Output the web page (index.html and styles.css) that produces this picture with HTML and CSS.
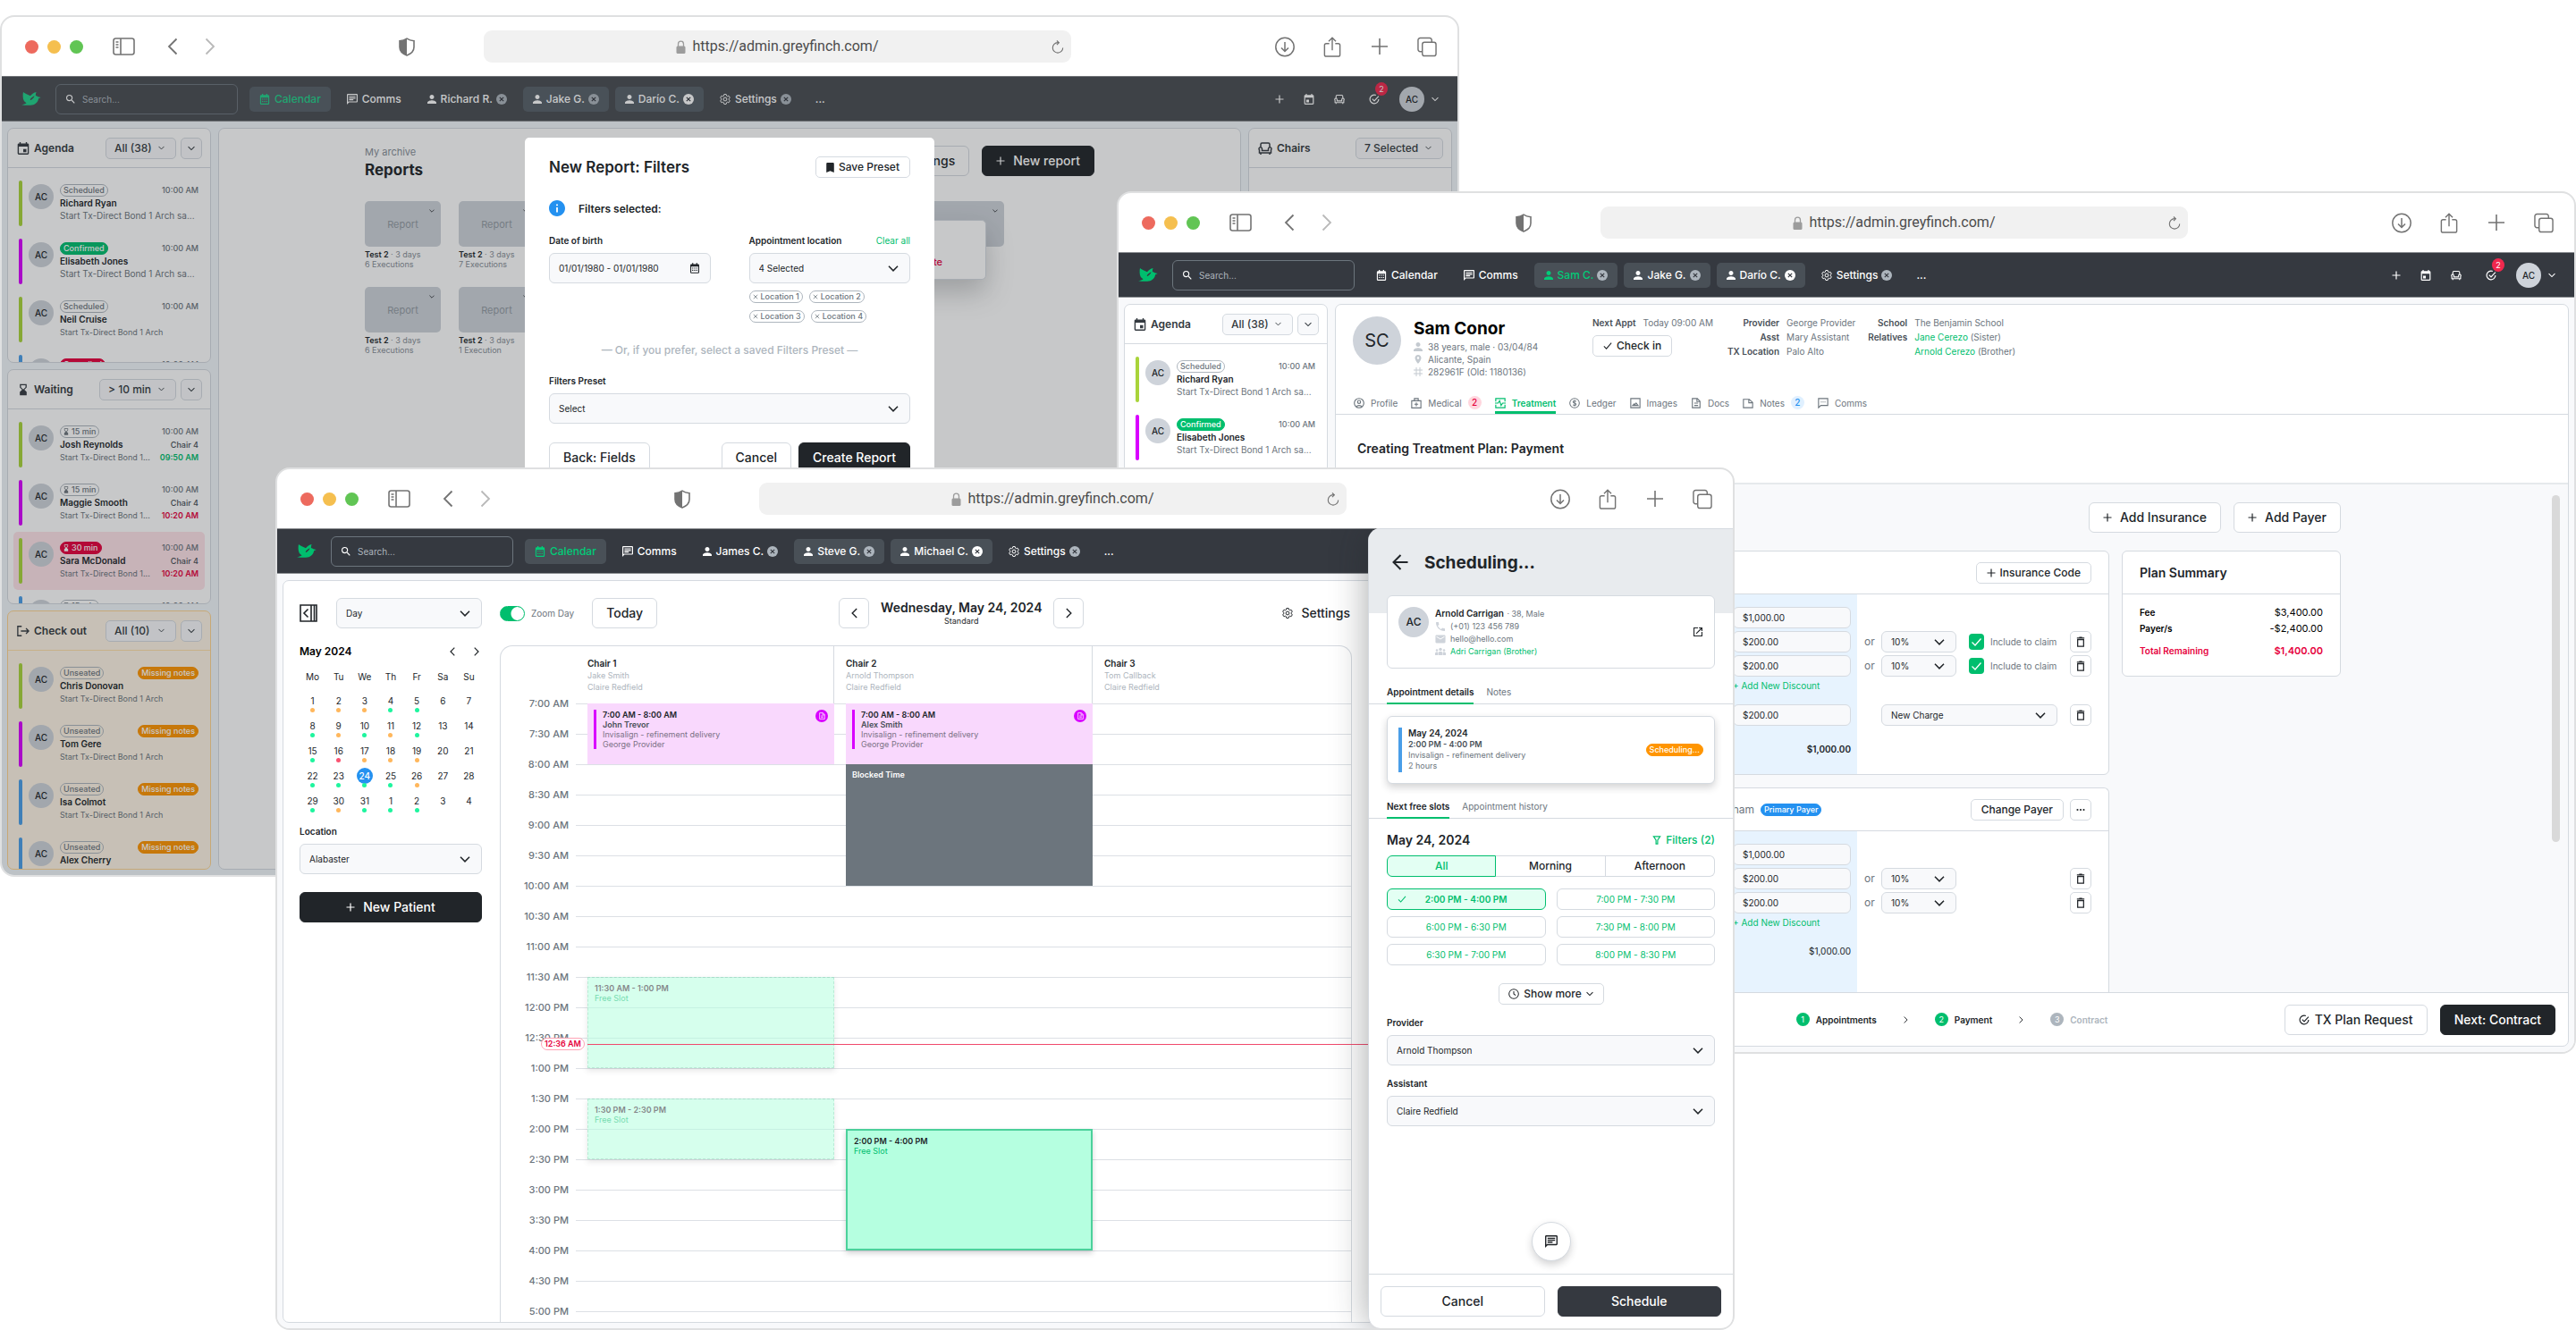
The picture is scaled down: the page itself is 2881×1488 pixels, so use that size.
FILE: index.html
```html
<!DOCTYPE html>
<html lang="en">
<head>
<meta charset="utf-8">
<meta name="viewport" content="width=device-width, initial-scale=1">
<title>Greyfinch</title>
<link rel="stylesheet" href="styles.css">
</head>
<body>
<svg class="sprite" aria-hidden="true">
  <symbol id="sidebar" viewBox="0 0 25 20"><g fill="none" stroke="currentColor" stroke-width="1.6"><rect x="1" y="1" width="23" height="18" rx="2.5"/><path d="M9 1v18M3.5 5h3M3.5 8h3M3.5 11h3"/></g></symbol>
  <symbol id="back" viewBox="0 0 12 20"><path d="M10.5 1.5 2 10l8.5 8.5" fill="none" stroke="currentColor" stroke-width="1.8"/></symbol>
  <symbol id="forward" viewBox="0 0 12 20"><path d="M1.5 1.5 10 10l-8.5 8.5" fill="none" stroke="currentColor" stroke-width="1.8"/></symbol>
  <symbol id="shield" viewBox="0 0 18 21"><path d="M9 1.2c2.5 1.6 5 2.3 8 2.6v7c0 4.6-3.5 7.5-8 9.2-4.500-1.700-8-4.600-8-9.200v-7c3-.3 5.500-1 8-2.600z" fill="none" stroke="currentColor" stroke-width="1.6"/><path d="M9 1.200v18.800c-4.500-1.700-8-4.600-8-9.200v-7c3-.3 5.500-1 8-2.600z"/></symbol>
  <symbol id="lock" viewBox="0 0 11 15"><path d="M2.5 7V4.2a3 3 0 0 1 6 0V7" fill="none" stroke="currentColor" stroke-width="1.3"/><rect x=".5" y="6.5" width="10" height="8.5" rx="1.5"/></symbol>
  <symbol id="refresh" viewBox="0 0 16 17"><g fill="none" stroke="currentColor" stroke-width="1.3"><path d="M14.5 9.5a6.5 6.5 0 1 1-6.500-6.500h1.500"/><path d="M6.800.500 9.500 3 6.800 5.800"/></g></symbol>
  <symbol id="download" viewBox="0 0 22 22"><g fill="none" stroke="currentColor" stroke-width="1.5"><circle cx="11" cy="11" r="10.2"/><path d="M11 5.500v10M7 12l4 4 4-4"/></g></symbol>
  <symbol id="share" viewBox="0 0 20 24"><g fill="none" stroke="currentColor" stroke-width="1.5"><path d="M6.500 8H3a2 2 0 0 0-2 2v11a2 2 0 0 0 2 2h14a2 2 0 0 0 2-2V10a2 2 0 0 0-2-2h-3.500M10 16V1.500M5.800 5.500 10 1.300l4.200 4.200"/></g></symbol>
  <symbol id="newtab" viewBox="0 0 18 18"><path d="M9 0v18M0 9h18" fill="none" stroke="currentColor" stroke-width="1.6"/></symbol>
  <symbol id="copy" viewBox="0 0 23 23"><g fill="none" stroke="currentColor" stroke-width="1.5"><path d="M6 17H3.500A2.500 2.500 0 0 1 1 14.500v-11A2.500 2.500 0 0 1 3.500 1h11A2.500 2.500 0 0 1 17 3.500V6"/><rect x="6" y="6" width="16" height="16" rx="2.5"/></g></symbol>
  <symbol id="bird" viewBox="0 0 22 15"><path d="M0 14.200c2.300-.3 4.200-.9 5.600-2C2.900 11 1.700 8.300 1.600 4.700 1.500 3 1.700 1.300 2 0c2 2 5.300 2.700 8 4.300 1.700-2.300 4-3.600 6.600-4.200-.6 1.300-.8 2.600-.7 3.800 1 .3 1.900.7 2.600 1.400l3.200.7-2.600 1.200c-.5 4.500-4.300 7.300-9.100 7.500-3.300.3-6.700.1-10-.5zM9.600 8.400l1 .5c1.700-1 3.300-2.700 4-4.700-1.900.8-3.900 2.300-5 4.200z" fill-rule="evenodd"/></symbol>
  <symbol id="search" viewBox="3 3 18 18"><path d="M15.500 14h-.79l-.28-.27A6.471 6.471 0 0 0 16 9.500 6.500 6.500 0 1 0 9.500 16c1.610 0 3.090-.59 4.230-1.570l.27.28v.79l5 4.990L20.490 19l-4.990-5zm-6 0C7.010 14 5 11.990 5 9.500S7.010 5 9.500 5 14 7.010 14 9.500 11.990 14 9.500 14z"/></symbol>
  <symbol id="calendar" viewBox="0 0 12 14"><path d="M2.500 0v1.500H1.500A1.500 1.500 0 0 0 0 3v9.500A1.500 1.500 0 0 0 1.500 14h9a1.500 1.500 0 0 0 1.500-1.500V3a1.500 1.500 0 0 0-1.500-1.500h-1V0H8v1.500H4V0zM1.300 5h9.400v7.600H1.300zM2.500 6.300h1.500v1.400H2.500zm2.700 0h1.500v1.400H5.200zm2.700 0h1.500v1.400H7.900zM2.500 9.200h1.500v1.400H2.500zm2.700 0h1.500v1.400H5.200zm2.700 0h1.500v1.400H7.900z" fill-rule="evenodd"/></symbol>
  <symbol id="chat" viewBox="2 2 20 20"><path d="M20 2H4c-1.100 0-2 .9-2 2v18l4-4h14c1.100 0 2-.9 2-2V4c0-1.100-.9-2-2-2zm0 14H5.170L4 17.170V4h16v12zM6 12h8v2H6zM6 9h12v2H6zM6 6h12v2H6z" fill-rule="evenodd"/></symbol>
  <symbol id="user" viewBox="4 4 16 16"><path d="M12 12c2.210 0 4-1.790 4-4s-1.790-4-4-4-4 1.790-4 4 1.790 4 4 4zm0 2c-2.670 0-8 1.340-8 4v2h16v-2c0-2.660-5.330-4-8-4z"/></symbol>
  <symbol id="close" viewBox="0 0 12 12"><circle cx="6" cy="6" r="6"/><path d="M3.800 3.800l4.400 4.400M8.200 3.800 3.800 8.200" stroke="#353940" stroke-width="1.2"/></symbol>
  <symbol id="gear" viewBox="1 1 22 22"><g fill="none" stroke="currentColor" stroke-width="1.8"><path d="M19.430 12.980c.04-.32.070-.64.070-.98 0-.34-.03-.66-.07-.98l2.110-1.650c.19-.15.240-.42.120-.64l-2-3.460c-.09-.16-.26-.25-.44-.25l-2.660.970c-.52-.4-1.080-.73-1.690-.98l-.38-2.650C14.460 2.180 14.250 2 14 2h-4c-.25 0-.46.180-.49.420l-.38 2.650c-.61.250-1.170.590-1.690.98l-2.490-1c-.23-.03-.5 0-.61.220l-2 3.460c-.13.220-.07.490.12.640l2.110 1.650c-.04.320-.07.650-.07.980 0 .330.030.660.070.980l-2.110 1.650c-.19.150-.24.420-.12.640l2 3.460c.09.160.26.250.44.250l2.660-1.030c.52.4 1.080.73 1.690.98l.38 2.650c.03.240.24.420.49.420h4c.25 0 .46-.18.490-.42l.38-2.650c.61-.25 1.170-.59 1.690-.98l2.490 1c.23.080.5 0 .61-.22l2-3.460c.12-.22.070-.49-.12-.64z"/><circle cx="12" cy="12" r="3.500"/></g></symbol>
  <symbol id="plus" viewBox="0 0 10 10"><path d="M5 .5v9M.5 5h9" stroke="currentColor" stroke-width="1.2" fill="none"/></symbol>
  <symbol id="event" viewBox="3 1 18 20"><path d="M12 12H7v5h5v-5zM16 1v2H8V1H6v2H5c-1.110 0-1.990.9-1.990 2L3 19c0 1.100.89 2 2 2h14c1.100 0 2-.9 2-2V5c0-1.100-.9-2-2-2h-1V1h-2zm3 18H5V8h14v11z"/></symbol>
  <symbol id="agenda" viewBox="3 1 18 20"><path d="M17 12h-5v5h5v-5zM16 1v2H8V1H6v2H5c-1.110 0-1.990.9-1.990 2L3 19c0 1.100.89 2 2 2h14c1.100 0 2-.9 2-2V5c0-1.100-.9-2-2-2h-1V1h-2zm3 18H5V8h14v11z"/></symbol>
  <symbol id="chair" viewBox="0 0 16 14"><g fill="none" stroke="currentColor" stroke-width="1.5"><path d="M3 6V2.500A1.500 1.500 0 0 1 4.500 1h7A1.500 1.500 0 0 1 13 2.500V6M4.500 9.500h7V7.500a1.750 1.750 0 1 1 3 1.200V12h-13V8.700a1.750 1.750 0 1 1 3-1.200zM3 12v2M13 12v2"/></g></symbol>
  <symbol id="done" viewBox="0 0 16 16"><path d="M14.500 8A6.500 6.500 0 1 1 10.500 2M5 7.500l3 3 6.500-7" fill="none" stroke="currentColor" stroke-width="1.6"/></symbol>
  <symbol id="down" viewBox="0 0 10 6"><path d="M.7.7 5 5 9.300.7" fill="none" stroke="currentColor" stroke-width="1.3"/></symbol>
  <symbol id="left" viewBox="0 0 6 10"><path d="M5.300.7 1 5l4.300 4.300" fill="none" stroke="currentColor" stroke-width="1.2"/></symbol>
  <symbol id="right" viewBox="0 0 6 10"><path d="M.7.7 5 5 .7 9.300" fill="none" stroke="currentColor" stroke-width="1.2"/></symbol>
  <symbol id="hourglass" viewBox="5 1 14 22"><path d="M6 2h12v6l-4 4 4 4v6H6v-6l4-4-4-4zM8 4v3.500l4 4 4-4V4z" fill-rule="evenodd"/></symbol>
  <symbol id="exit" viewBox="0 0 16 14"><path d="M6 1H1v12h5M5 7h10M11.500 3.500 15 7l-3.500 3.500" fill="none" stroke="currentColor" stroke-width="1.5"/></symbol>
  <symbol id="bookmark" viewBox="5 3 14 18"><path d="M17 3H7c-1.100 0-1.990.9-1.990 2L5 21l7-3 7 3V5c0-1.100-.9-2-2-2z"/></symbol>
  <symbol id="info" viewBox="2 2 20 20"><path d="M12 2C6.480 2 2 6.480 2 12s4.480 10 10 10 10-4.480 10-10S17.520 2 12 2zm1 15h-2v-6h2v6zm0-8h-2V7h2v2z"/></symbol>
  <symbol id="x" viewBox="0 0 8 8"><path d="M1 1l6 6M7 1 1 7" fill="none" stroke="currentColor"/></symbol>
  <symbol id="pin" viewBox="5 2 14 20"><path d="M12 2C8.130 2 5 5.130 5 9c0 5.250 7 13 7 13s7-7.750 7-13c0-3.870-3.130-7-7-7zm0 9.500c-1.380 0-2.500-1.120-2.500-2.500s1.120-2.500 2.500-2.500 2.500 1.120 2.500 2.500-1.120 2.500-2.500 2.500z"/></symbol>
  <symbol id="hash" viewBox="0 0 10 10"><path d="M3 0v10M7 0v10M0 3h10M0 7h10" fill="none" stroke="currentColor"/></symbol>
  <symbol id="check" viewBox="0 0 12 10"><path d="M1 5.500 4.300 8.800 11 1" fill="none" stroke="currentColor" stroke-width="1.3"/></symbol>
  <symbol id="profile" viewBox="0 0 14 14"><g fill="none" stroke="currentColor" stroke-width="1.3"><circle cx="7" cy="7" r="6.200"/><circle cx="7" cy="5.500" r="2"/><path d="M3.500 11.500c1-2 6-2 7 0"/></g></symbol>
  <symbol id="medical" viewBox="0 0 14 14"><path d="M1 4h12v9.300H1zM4.500 4V1h5v3M7 6v5M4.500 8.500h5" fill="none" stroke="currentColor" stroke-width="1.3"/></symbol>
  <symbol id="pulse" viewBox="0 0 14 14"><path d="M1 5V1h12v4M1 9v4h12V9M0 7h4l2-3 2 6 2-3h4" fill="none" stroke="currentColor" stroke-width="1.4"/></symbol>
  <symbol id="dollar" viewBox="0 0 14 14"><g fill="none" stroke="currentColor" stroke-width="1.2"><circle cx="7" cy="7" r="6.200"/><path d="M9 5c-1-1.500-4-1-4 .5C5 7.500 9 6.500 9 8.500 9 10 6 10.500 5 9M7 2.800v8.400"/></g></symbol>
  <symbol id="image" viewBox="0 0 14 14"><path d="M1 1h12v12H1zM3.500 10h7L8 7l-1.500 2-1-1z" fill="none" stroke="currentColor" stroke-width="1.3"/></symbol>
  <symbol id="doc" viewBox="0 0 12 14"><path d="M1 1h6.500L11 4.500V13H1zM3.500 7h5M3.500 10h5M7 1v4h4" fill="none" stroke="currentColor" stroke-width="1.3"/></symbol>
  <symbol id="note" viewBox="0 0 14 14"><path d="M1 2h7.500L13 6v7H1zM8 2v4.500h5" fill="none" stroke="currentColor" stroke-width="1.3"/></symbol>
  <symbol id="message" viewBox="0 0 14 14"><path d="M1 13V1h12v9H4zM4 5.500h1.200M6.400 5.500h1.200M8.800 5.500H10" fill="none" stroke="currentColor" stroke-width="1.3"/></symbol>
  <symbol id="trash" viewBox="0 0 12 14"><path d="M2 4h8v9H2zM1 2h10M4 1h4" fill="none" stroke="currentColor" stroke-width="1.5"/></symbol>
  <symbol id="dots" viewBox="0 0 12 4"><circle cx="1.800" cy="2" r="1.300"/><circle cx="6" cy="2" r="1.300"/><circle cx="10.200" cy="2" r="1.300"/></symbol>
  <symbol id="collapse" viewBox="0 0 20 20"><path d="M1 1h18v18H1zM13 1v18M16.500 1v18M9.500 5.500 5 10l4.500 4.500" fill="none" stroke="currentColor" stroke-width="1.6"/></symbol>
  <symbol id="arrow" viewBox="0 0 18 18"><path d="M17.500 9H1.500M9.500 1 1.500 9l8 8" fill="none" stroke="currentColor" stroke-width="2"/></symbol>
  <symbol id="phone" viewBox="3 3 18 18"><path d="M6.620 10.790c1.440 2.830 3.760 5.140 6.590 6.590l2.200-2.200c.27-.27.67-.36 1.020-.24 1.120.37 2.330.57 3.570.57.55 0 1 .45 1 1V20c0 .55-.45 1-1 1-9.390 0-17-7.610-17-17 0-.55.45-1 1-1h3.500c.55 0 1 .45 1 1 0 1.250.2 2.450.57 3.570.11.35.03.74-.25 1.020l-2.200 2.200z"/></symbol>
  <symbol id="mail" viewBox="2 3 20 18"><path d="M20 4H4c-1.100 0-1.990.9-1.990 2L2 18c0 1.100.9 2 2 2h16c1.100 0 2-.9 2-2V6c0-1.100-.9-2-2-2zm0 4l-8 5-8-5V6l8 5 8-5v2z"/></symbol>
  <symbol id="people" viewBox="0 0 24 18"><circle cx="12" cy="4" r="3.500"/><circle cx="4" cy="6" r="2.500"/><circle cx="20" cy="6" r="2.500"/><path d="M0 17v-4c0-2 2-3 4-3h2v7zM24 17v-4c0-2-2-3-4-3h-2v7zM7 17v-5c0-2 2-3 5-3s5 1 5 3v5z"/></symbol>
  <symbol id="open" viewBox="3 3 18 18"><path d="M19 19H5V5h7V3H3v18h18v-9h-2v7zM14 3v2h3.590l-9.830 9.830 1.410 1.410L19 6.410V10h2V3h-7z"/></symbol>
  <symbol id="filter" viewBox="0 0 10 11"><path d="M1 1h8L6 5.500V10H4V5.500z" fill="none" stroke="currentColor" stroke-width="1.3"/></symbol>
  <symbol id="clock" viewBox="0 0 14 14"><g fill="none" stroke="currentColor" stroke-width="1.2"><circle cx="7" cy="7" r="6.200"/><path d="M7 3.500V7l2.500 2"/></g></symbol>
</svg>

<main class="desktop">

<!-- Reports window -->
<section class="window window-reports" aria-label="Reports">
  <header class="chrome">
    <div class="chrome-left">
      <span class="lights"><i class="light red"></i><i class="light amber"></i><i class="light green"></i></span>
      <svg class="c-sidebar"><use href="#sidebar"/></svg>
      <svg class="c-arrow"><use href="#back"/></svg><svg class="c-arrow c-next"><use href="#forward"/></svg>
      <svg class="c-shield"><use href="#shield"/></svg>
    </div>
    <div class="address"><span class="url"><svg class="c-lock"><use href="#lock"/></svg>https://admin.greyfinch.com/</span><svg class="c-refresh"><use href="#refresh"/></svg></div>
    <div class="chrome-right"><svg><use href="#download"/></svg><svg><use href="#share"/></svg><svg class="c-plus"><use href="#newtab"/></svg><svg><use href="#copy"/></svg></div>
  </header>
  <div class="app">
    <nav class="nav">
      <svg class="bird"><use href="#bird"/></svg>
      <label class="nav-search"><svg class="i10"><use href="#search"/></svg><input type="search" placeholder="Search..." aria-label="Search"></label>
      <div class="nav-tabs">
        <a href="#" class="pill current"><svg class="i12"><use href="#calendar"/></svg>Calendar</a>
        <a href="#"><svg class="i12"><use href="#chat"/></svg>Comms</a>
        <a href="#"><svg class="i10"><use href="#user"/></svg>Richard R.<svg class="x"><use href="#close"/></svg></a>
        <a href="#" class="pill"><svg class="i10"><use href="#user"/></svg>Jake G.<svg class="x"><use href="#close"/></svg></a>
        <a href="#" class="pill"><svg class="i10"><use href="#user"/></svg>Darío C.<svg class="x on"><use href="#close"/></svg></a>
        <a href="#"><svg class="i12"><use href="#gear"/></svg>Settings<svg class="x"><use href="#close"/></svg></a>
        <a href="#" class="more">...</a>
      </div>
      <div class="nav-tools"><svg class="i10"><use href="#plus"/></svg><svg class="i12"><use href="#event"/></svg><svg class="i12"><use href="#chair"/></svg><span class="alerts"><svg class="i12"><use href="#done"/></svg><b class="badge">2</b></span><span class="me"><span class="avatar">AC</span><svg class="i8"><use href="#down"/></svg></span></div>
    </nav>
    <div class="body">
      <aside class="side">
        <section class="panel queue">
          <header class="panel-head"><svg class="i14"><use href="#agenda"/></svg><h2>Agenda</h2><span class="pick pick-a"><select aria-label="Agenda filter"><option>All (38)</option></select><svg><use href="#down"/></svg></span><button class="mini" aria-label="More"><svg class="i8"><use href="#down"/></svg></button></header>
          <ul class="list">
            <li class="item lime"><span class="avatar">AC</span><div class="who"><span class="tag">Scheduled</span><b>Richard Ryan</b></div><div class="when">10:00 AM</div><p class="big">Start Tx-Direct Bond 1 Arch sa...</p></li>
            <li class="item pink"><span class="avatar">AC</span><div class="who"><span class="tag ok">Confirmed</span><b>Elisabeth Jones</b></div><div class="when">10:00 AM</div><p class="big">Start Tx-Direct Bond 1 Arch sa...</p></li>
            <li class="item lime"><span class="avatar">AC</span><div class="who"><span class="tag">Scheduled</span><b>Neil Cruise</b></div><div class="when">10:00 AM</div><p>Start Tx-Direct Bond 1 Arch</p></li>
            <li class="item blue"><span class="avatar">AC</span><div class="who"><span class="tag bad">Cancelled</span></div><div class="when">10:00 AM</div></li>
          </ul>
        </section>
        <section class="panel queue">
          <header class="panel-head"><svg class="i14"><use href="#hourglass"/></svg><h2>Waiting</h2><span class="pick pick-w"><select aria-label="Waiting filter"><option>&gt; 10 min</option></select><svg><use href="#down"/></svg></span><button class="mini" aria-label="More"><svg class="i8"><use href="#down"/></svg></button></header>
          <ul class="list">
            <li class="item lime"><span class="avatar">AC</span><div class="who"><span class="tag"><svg><use href="#hourglass"/></svg>15 min</span><b>Josh Reynolds</b></div><div class="when">10:00 AM<b>Chair 4</b><strong class="early">09:50 AM</strong></div><p>Start Tx-Direct Bond 1...</p></li>
            <li class="item pink"><span class="avatar">AC</span><div class="who"><span class="tag"><svg><use href="#hourglass"/></svg>15 min</span><b>Maggie Smooth</b></div><div class="when">10:00 AM<b>Chair 4</b><strong class="late">10:20 AM</strong></div><p>Start Tx-Direct Bond 1...</p></li>
            <li class="item lime alarm"><span class="avatar">AC</span><div class="who"><span class="tag bad"><svg><use href="#hourglass"/></svg>30 min</span><b>Sara McDonald</b></div><div class="when">10:00 AM<b>Chair 4</b><strong class="late">10:20 AM</strong></div><p>Start Tx-Direct Bond 1...</p></li>
            <li class="item blue"><span class="avatar">AC</span><div class="who"><span class="tag"><svg><use href="#hourglass"/></svg>15 min</span></div><div class="when">10:00 AM</div></li>
          </ul>
        </section>
        <section class="panel queue queue-out">
          <header class="panel-head"><svg class="i14"><use href="#exit"/></svg><h2>Check out</h2><span class="pick pick-a"><select aria-label="Check out filter"><option>All (10)</option></select><svg><use href="#down"/></svg></span><button class="mini" aria-label="More"><svg class="i8"><use href="#down"/></svg></button></header>
          <ul class="list">
            <li class="item lime"><span class="avatar">AC</span><div class="who"><span class="tag">Unseated</span><b>Chris Donovan</b></div><div class="when"><span class="tag warn">Missing notes</span></div><p>Start Tx-Direct Bond 1 Arch</p></li>
            <li class="item pink"><span class="avatar">AC</span><div class="who"><span class="tag">Unseated</span><b>Tom Gere</b></div><div class="when"><span class="tag warn">Missing notes</span></div><p>Start Tx-Direct Bond 1 Arch</p></li>
            <li class="item blue"><span class="avatar">AC</span><div class="who"><span class="tag">Unseated</span><b>Isa Colmot</b></div><div class="when"><span class="tag warn">Missing notes</span></div><p>Start Tx-Direct Bond 1 Arch</p></li>
            <li class="item blue"><span class="avatar">AC</span><div class="who"><span class="tag">Unseated</span><b>Alex Cherry</b></div><div class="when"><span class="tag warn">Missing notes</span></div><p>Start Tx-Direct Bond 1 Arch</p></li>
          </ul>
        </section>
      </aside>
      <section class="panel reports">
        <header class="reports-head"><div><p>My archive</p><h1>Reports</h1></div><div class="actions"><button class="btn">Settings</button><button class="btn dark"><svg class="i10"><use href="#plus"/></svg>New report</button></div></header>
        <div class="tiles">
          <article><div class="tile">Report<svg class="i6"><use href="#down"/></svg></div><p><b>Test 2</b> · 3 days<br>6 Executions</p></article>
          <article><div class="tile">Report<svg class="i6"><use href="#down"/></svg></div><p><b>Test 2</b> · 3 days<br>7 Executions</p></article>
          <article class="last"><div class="tile"><svg class="i6"><use href="#down"/></svg></div><div class="popover"><a href="#">Delete</a></div></article>
          <article class="row2"><div class="tile">Report<svg class="i6"><use href="#down"/></svg></div><p><b>Test 2</b> · 3 days<br>6 Executions</p></article>
          <article><div class="tile">Report<svg class="i6"><use href="#down"/></svg></div><p><b>Test 2</b> · 3 days<br>1 Execution</p></article>
        </div>
      </section>
      <aside class="panel chairs"><header class="panel-head"><svg class="i16"><use href="#chair"/></svg><h2>Chairs</h2><span class="pick pick-c"><select aria-label="Chairs shown"><option>7 Selected</option></select><svg><use href="#down"/></svg></span></header></aside>
    </div>
    <div class="scrim"></div>
    <form class="modal" role="dialog" aria-label="New Report: Filters">
      <header class="modal-head"><h2>New Report: Filters</h2><button type="button" class="btn small"><svg class="bm"><use href="#bookmark"/></svg>Save Preset</button></header>
      <p class="notice"><svg><use href="#info"/></svg>Filters selected:</p>
      <div class="pair">
        <div class="field"><label for="dob">Date of birth</label><span class="control"><input id="dob" value="01/01/1980 - 01/01/1980"><svg class="cal"><use href="#calendar"/></svg></span></div>
        <div class="field"><span class="field-top"><label for="loc">Appointment location</label><a href="#">Clear all</a></span><span class="control"><select id="loc"><option>4 Selected</option></select><svg class="i12"><use href="#down"/></svg></span>
          <div class="chips"><button type="button" class="chip"><svg><use href="#x"/></svg>Location 1</button><button type="button" class="chip"><svg><use href="#x"/></svg>Location 2</button></div>
          <div class="chips"><button type="button" class="chip"><svg><use href="#x"/></svg>Location 3</button><button type="button" class="chip"><svg><use href="#x"/></svg>Location 4</button></div>
        </div>
      </div>
      <p class="or-line">— Or, if you prefer, select a saved Filters Preset —</p>
      <div class="field"><label for="preset">Filters Preset</label><span class="control"><select id="preset"><option>Select</option></select><svg class="i12"><use href="#down"/></svg></span></div>
      <footer class="modal-foot"><button type="button" class="btn">Back: Fields</button><span><button type="button" class="btn">Cancel</button><button class="btn dark">Create Report</button></span></footer>
    </form>
  </div>
</section>

<!-- Treatment plan window -->
<section class="window window-plan" aria-label="Treatment plan">
  <header class="chrome">
    <div class="chrome-left">
      <span class="lights"><i class="light red"></i><i class="light amber"></i><i class="light green"></i></span>
      <svg class="c-sidebar"><use href="#sidebar"/></svg>
      <svg class="c-arrow"><use href="#back"/></svg><svg class="c-arrow c-next"><use href="#forward"/></svg>
      <svg class="c-shield"><use href="#shield"/></svg>
    </div>
    <div class="address"><span class="url"><svg class="c-lock"><use href="#lock"/></svg>https://admin.greyfinch.com/</span><svg class="c-refresh"><use href="#refresh"/></svg></div>
    <div class="chrome-right"><svg><use href="#download"/></svg><svg><use href="#share"/></svg><svg class="c-plus"><use href="#newtab"/></svg><svg><use href="#copy"/></svg></div>
  </header>
  <div class="app">
    <nav class="nav">
      <svg class="bird"><use href="#bird"/></svg>
      <label class="nav-search"><svg class="i10"><use href="#search"/></svg><input type="search" placeholder="Search..." aria-label="Search"></label>
      <div class="nav-tabs">
        <a href="#"><svg class="i12"><use href="#calendar"/></svg>Calendar</a>
        <a href="#"><svg class="i12"><use href="#chat"/></svg>Comms</a>
        <a href="#" class="pill current"><svg class="i10"><use href="#user"/></svg>Sam C.<svg class="x"><use href="#close"/></svg></a>
        <a href="#" class="pill"><svg class="i10"><use href="#user"/></svg>Jake G.<svg class="x"><use href="#close"/></svg></a>
        <a href="#" class="pill"><svg class="i10"><use href="#user"/></svg>Darío C.<svg class="x on"><use href="#close"/></svg></a>
        <a href="#"><svg class="i12"><use href="#gear"/></svg>Settings<svg class="x"><use href="#close"/></svg></a>
        <a href="#" class="more">...</a>
      </div>
      <div class="nav-tools"><svg class="i10"><use href="#plus"/></svg><svg class="i12"><use href="#event"/></svg><svg class="i12"><use href="#chair"/></svg><span class="alerts"><svg class="i12"><use href="#done"/></svg><b class="badge">2</b></span><span class="me"><span class="avatar">AC</span><svg class="i8"><use href="#down"/></svg></span></div>
    </nav>
    <div class="body">
      <aside class="side">
        <section class="panel queue">
          <header class="panel-head"><svg class="i14"><use href="#agenda"/></svg><h2>Agenda</h2><span class="pick pick-a"><select aria-label="Agenda filter"><option>All (38)</option></select><svg><use href="#down"/></svg></span><button class="mini" aria-label="More"><svg class="i8"><use href="#down"/></svg></button></header>
          <ul class="list">
            <li class="item lime"><span class="avatar">AC</span><div class="who"><span class="tag">Scheduled</span><b>Richard Ryan</b></div><div class="when">10:00 AM</div><p class="big">Start Tx-Direct Bond 1 Arch sa...</p></li>
            <li class="item pink"><span class="avatar">AC</span><div class="who"><span class="tag ok">Confirmed</span><b>Elisabeth Jones</b></div><div class="when">10:00 AM</div><p class="big">Start Tx-Direct Bond 1 Arch sa...</p></li>
          </ul>
        </section>
      </aside>
      <section class="panel plan">
        <header class="patient">
          <span class="avatar xl">SC</span>
          <div class="identity"><h1>Sam Conor</h1><p><svg><use href="#user"/></svg>38 years, male · 03/04/84</p><p><svg><use href="#pin"/></svg>Alicante, Spain</p><p><svg><use href="#hash"/></svg>282961F (Old: 1180136)</p></div>
          <div class="next"><p><b>Next Appt</b>Today 09:00 AM</p><button class="btn small"><svg class="i10"><use href="#check"/></svg>Check in</button></div>
          <dl><dt>Provider</dt><dd>George Provider</dd><dt>Asst</dt><dd>Mary Assistant</dd><dt>TX Location</dt><dd>Palo Alto</dd></dl>
          <dl><dt>School</dt><dd>The Benjamin School</dd><dt>Relatives</dt><dd><a href="#">Jane Cerezo</a> (Sister)</dd><dt></dt><dd><a href="#">Arnold Cerezo</a> (Brother)</dd></dl>
        </header>
        <nav class="tabs" aria-label="Patient">
          <a href="#"><svg><use href="#profile"/></svg>Profile</a>
          <a href="#"><svg><use href="#medical"/></svg>Medical<b class="count rose">2</b></a>
          <a href="#" class="current"><svg><use href="#pulse"/></svg>Treatment</a>
          <a href="#"><svg><use href="#dollar"/></svg>Ledger</a>
          <a href="#"><svg><use href="#image"/></svg>Images</a>
          <a href="#"><svg><use href="#doc"/></svg>Docs</a>
          <a href="#"><svg><use href="#note"/></svg>Notes<b class="count sky">2</b></a>
          <a href="#"><svg><use href="#message"/></svg>Comms</a>
        </nav>
        <h2 class="plan-title">Creating Treatment Plan: Payment</h2>
        <div class="scroller">
          <div class="plan-body">
            <div class="actions plan-actions"><button class="btn"><svg class="i10"><use href="#plus"/></svg>Add Insurance</button><button class="btn"><svg class="i10"><use href="#plus"/></svg>Add Payer</button></div>
            <div class="payers">
              <section class="card">
                <header class="card-head"><button class="btn small"><svg class="i10"><use href="#plus"/></svg>Insurance Code</button></header>
                <div class="fees">
                  <div class="amounts"><input aria-label="Fee" value="$1,000.00"><input aria-label="Discount 1" value="$200.00"><input aria-label="Discount 2" value="$200.00"><a href="#">+ Add New Discount</a><input aria-label="Charge" value="$200.00"><b>$1,000.00</b></div>
                  <div class="options">
                    <div class="option r2"><span>or</span><span class="control low"><select aria-label="Discount 1 percent"><option>10%</option></select><svg class="i12"><use href="#down"/></svg></span><label><input type="checkbox" checked>Include to claim</label><button class="mini" aria-label="Remove"><svg class="bin"><use href="#trash"/></svg></button></div>
                    <div class="option r3"><span>or</span><span class="control low"><select aria-label="Discount 2 percent"><option>10%</option></select><svg class="i12"><use href="#down"/></svg></span><label><input type="checkbox" checked>Include to claim</label><button class="mini" aria-label="Remove"><svg class="bin"><use href="#trash"/></svg></button></div>
                    <div class="option r5"><span></span><span class="control low charge"><select aria-label="Charge type"><option>New Charge</option></select><svg class="i12"><use href="#down"/></svg></span><button class="mini" aria-label="Remove"><svg class="bin"><use href="#trash"/></svg></button></div>
                  </div>
                </div>
              </section>
              <section class="card open">
                <header class="card-head"><div class="payer">Joan Graham</div><span class="tag info">Primary Payer</span><button class="btn small">Change Payer</button><button class="mini" aria-label="More"><svg class="i10 dots"><use href="#dots"/></svg></button></header>
                <div class="fees short">
                  <div class="amounts"><input aria-label="Fee" value="$1,000.00"><input aria-label="Discount 1" value="$200.00"><input aria-label="Discount 2" value="$200.00"><a href="#">+ Add New Discount</a><span>$1,000.00</span></div>
                  <div class="options">
                    <div class="option r2"><span>or</span><span class="control low"><select aria-label="Discount 1 percent"><option>10%</option></select><svg class="i12"><use href="#down"/></svg></span><button class="mini" aria-label="Remove"><svg class="bin"><use href="#trash"/></svg></button></div>
                    <div class="option r3"><span>or</span><span class="control low"><select aria-label="Discount 2 percent"><option>10%</option></select><svg class="i12"><use href="#down"/></svg></span><button class="mini" aria-label="Remove"><svg class="bin"><use href="#trash"/></svg></button></div>
                  </div>
                </div>
              </section>
            </div>
            <section class="card summary"><header class="card-head"><h3>Plan Summary</h3></header><dl><dt>Fee</dt><dd>$3,400.00</dd><dt>Payer/s</dt><dd>-$2,400.00</dd><dt class="total">Total Remaining</dt><dd class="total">$1,400.00</dd></dl></section>
          </div>
          <div class="bar"></div>
        </div>
        <footer class="plan-foot">
          <ol class="steps"><li><i>1</i>Appointments</li><li class="sep"><svg><use href="#right"/></svg></li><li><i>2</i>Payment</li><li class="sep"><svg><use href="#right"/></svg></li><li class="todo"><i>3</i>Contract</li></ol>
          <div class="actions"><button class="btn"><svg class="i12"><use href="#done"/></svg>TX Plan Request</button><button class="btn dark">Next: Contract</button></div>
        </footer>
      </section>
    </div>
  </div>
</section>

<!-- Calendar window -->
<section class="window window-calendar" aria-label="Calendar">
  <header class="chrome">
    <div class="chrome-left">
      <span class="lights"><i class="light red"></i><i class="light amber"></i><i class="light green"></i></span>
      <svg class="c-sidebar"><use href="#sidebar"/></svg>
      <svg class="c-arrow"><use href="#back"/></svg><svg class="c-arrow c-next"><use href="#forward"/></svg>
      <svg class="c-shield"><use href="#shield"/></svg>
    </div>
    <div class="address"><span class="url"><svg class="c-lock"><use href="#lock"/></svg>https://admin.greyfinch.com/</span><svg class="c-refresh"><use href="#refresh"/></svg></div>
    <div class="chrome-right"><svg><use href="#download"/></svg><svg><use href="#share"/></svg><svg class="c-plus"><use href="#newtab"/></svg><svg><use href="#copy"/></svg></div>
  </header>
  <div class="app">
    <nav class="nav">
      <svg class="bird"><use href="#bird"/></svg>
      <label class="nav-search"><svg class="i10"><use href="#search"/></svg><input type="search" placeholder="Search..." aria-label="Search"></label>
      <div class="nav-tabs">
        <a href="#" class="pill current"><svg class="i12"><use href="#calendar"/></svg>Calendar</a>
        <a href="#"><svg class="i12"><use href="#chat"/></svg>Comms</a>
        <a href="#"><svg class="i10"><use href="#user"/></svg>James C.<svg class="x"><use href="#close"/></svg></a>
        <a href="#" class="pill"><svg class="i10"><use href="#user"/></svg>Steve G.<svg class="x"><use href="#close"/></svg></a>
        <a href="#" class="pill"><svg class="i10"><use href="#user"/></svg>Michael C.<svg class="x on"><use href="#close"/></svg></a>
        <a href="#"><svg class="i12"><use href="#gear"/></svg>Settings<svg class="x"><use href="#close"/></svg></a>
        <a href="#" class="more">...</a>
      </div>
    </nav>
    <div class="body">
      <section class="panel planner">
        <aside class="month">
          <div class="view"><svg class="i20"><use href="#collapse"/></svg><span class="control"><select aria-label="View"><option>Day</option></select><svg class="i12"><use href="#down"/></svg></span></div>
          <div class="month-head"><h2>May 2024</h2><button aria-label="Previous month"><svg><use href="#left"/></svg></button><button aria-label="Next month"><svg><use href="#right"/></svg></button></div>
          <table>
            <thead><tr><th>Mo</th><th>Tu</th><th>We</th><th>Th</th><th>Fr</th><th>Sa</th><th>Su</th></tr></thead>
            <tbody>
              <tr><td class="o">1</td><td class="o">2</td><td class="o">3</td><td class="g">4</td><td class="g">5</td><td>6</td><td>7</td></tr>
              <tr><td class="g">8</td><td class="o">9</td><td class="g">10</td><td class="o">11</td><td class="g">12</td><td>13</td><td>14</td></tr>
              <tr><td class="g">15</td><td class="r">16</td><td class="o">17</td><td class="o">18</td><td class="o">19</td><td>20</td><td>21</td></tr>
              <tr><td class="g">22</td><td class="g">23</td><td class="g"><span class="today">24</span></td><td class="g">25</td><td class="o">26</td><td>27</td><td>28</td></tr>
              <tr><td class="g">29</td><td class="o">30</td><td class="g">31</td><td class="g">1</td><td class="g">2</td><td>3</td><td>4</td></tr>
            </tbody>
          </table>
          <div class="field"><label for="place">Location</label><span class="control"><select id="place"><option>Alabaster</option></select><svg class="i12"><use href="#down"/></svg></span></div>
          <button class="btn dark new-patient"><svg class="i10"><use href="#plus"/></svg>New Patient</button>
        </aside>
        <div class="day">
          <header class="toolbar">
            <div class="zoom"><label><input type="checkbox" class="switch" checked>Zoom Day</label><button class="btn">Today</button></div>
            <div class="date"><button class="btn sq" aria-label="Previous day"><svg><use href="#left"/></svg></button><div><h1>Wednesday, May 24, 2024</h1><p>Standard</p></div><button class="btn sq" aria-label="Next day"><svg><use href="#right"/></svg></button></div>
            <button class="plain"><svg class="i12"><use href="#gear"/></svg>Settings</button>
          </header>
          <div class="schedule">
            <div class="cols"><div><b>Chair 1</b><p>Jake Smith<br>Claire Redfield</p></div><div><b>Chair 2</b><p>Arnold Thompson<br>Claire Redfield</p></div><div><b>Chair 3</b><p>Tom Callback<br>Claire Redfield</p></div></div>
            <div class="hours">
              <div class="times"><time>7:00 AM</time><time>7:30 AM</time><time>8:00 AM</time><time>8:30 AM</time><time>9:00 AM</time><time>9:30 AM</time><time>10:00 AM</time><time>10:30 AM</time><time>11:00 AM</time><time>11:30 AM</time><time>12:00 PM</time><time>12:30 PM</time><time>1:00 PM</time><time>1:30 PM</time><time>2:00 PM</time><time>2:30 PM</time><time>3:00 PM</time><time>3:30 PM</time><time>4:00 PM</time><time>4:30 PM</time><time>5:00 PM</time></div>
              <div class="lines"></div>
              <article class="event visit c1"><div><b>7:00 AM - 8:00 AM</b><b>John Trevor</b><p>Invisalign - refinement delivery</p><p>George Provider</p></div><span class="file"><svg><use href="#doc"/></svg></span></article>
              <article class="event visit c2"><div><b>7:00 AM - 8:00 AM</b><b>Alex Smith</b><p>Invisalign - refinement delivery</p><p>George Provider</p></div><span class="file"><svg><use href="#doc"/></svg></span></article>
              <article class="event blocked"><b>Blocked Time</b></article>
              <article class="event free f1"><b>11:30 AM - 1:00 PM</b><p>Free Slot</p></article>
              <article class="event free f2"><b>1:30 PM - 2:30 PM</b><p>Free Slot</p></article>
              <article class="event free chosen"><b>2:00 PM - 4:00 PM</b><p>Free Slot</p></article>
              <div class="now"><span>12:36 AM</span></div>
            </div>
          </div>
        </div>
      </section>
    </div>
    <aside class="drawer" aria-label="Scheduling">
      <header class="drawer-head"><svg><use href="#arrow"/></svg><h2>Scheduling...</h2></header>
      <div class="drawer-main">
        <section class="contact"><span class="avatar lg">AC</span><div><h3>Arnold Carrigan <span>· 38, Male</span></h3><p><svg><use href="#phone"/></svg>(+01) 123 456 789</p><p><svg><use href="#mail"/></svg>hello@hello.com</p><p><svg><use href="#people"/></svg><a href="#">Adri Carrigan (Brother)</a></p></div><svg class="i10"><use href="#open"/></svg></section>
        <nav class="subtabs"><a href="#" class="current">Appointment details</a><a href="#">Notes</a></nav>
        <section class="appt"><div><h3>May 24, 2024</h3><b>2:00 PM - 4:00 PM</b><p>Invisalign - refinement delivery<br>2 hours</p></div><span class="tag warn">Scheduling...</span></section>
        <nav class="subtabs"><a href="#" class="current">Next free slots</a><a href="#">Appointment history</a></nav>
        <div class="slots-head"><h3>May 24, 2024</h3><a href="#"><svg class="i10"><use href="#filter"/></svg>Filters (2)</a></div>
        <div class="segments"><label><input type="radio" name="part" checked>All</label><label><input type="radio" name="part">Morning</label><label><input type="radio" name="part">Afternoon</label></div>
        <div class="slots">
          <label><input type="radio" name="slot" checked><svg><use href="#check"/></svg>2:00 PM - 4:00 PM</label><label><input type="radio" name="slot">7:00 PM - 7:30 PM</label>
          <label><input type="radio" name="slot">6:00 PM - 6:30 PM</label><label><input type="radio" name="slot">7:30 PM - 8:00 PM</label>
          <label><input type="radio" name="slot">6:30 PM - 7:00 PM</label><label><input type="radio" name="slot">8:00 PM - 8:30 PM</label>
        </div>
        <button class="btn small show-more"><svg class="i12"><use href="#clock"/></svg>Show more<svg class="i8"><use href="#down"/></svg></button>
        <div class="field"><label for="prov">Provider</label><span class="control"><select id="prov"><option>Arnold Thompson</option></select><svg class="i12"><use href="#down"/></svg></span></div>
        <div class="field"><label for="asst">Assistant</label><span class="control"><select id="asst"><option>Claire Redfield</option></select><svg class="i12"><use href="#down"/></svg></span></div>
        <button class="fab" aria-label="Messages"><svg class="i14"><use href="#chat"/></svg></button>
      </div>
      <footer class="drawer-foot"><button class="btn">Cancel</button><button class="btn slate">Schedule</button></footer>
    </aside>
  </div>
</section>
</main>
</body>
</html>
```
FILE: styles.css
```css
:root {
  --ink: #212529;
  --body: #495057;
  --muted: #6c757d;
  --faint: #adb5bd;
  --line: #d5dae0;
  --soft: #f8f9fb;
  --green: #00be6e;
  --red: #e6003c;
  --orange: #ff9500;
  --blue: #2491f0;
  --avatar: #ced3da;
  --nav: #353940;
}

* { box-sizing: border-box; }
body { margin: 0; background: #fff; color: var(--ink); font: 400 10px/14px Inter, "Liberation Sans", sans-serif; }
h1, h2, h3, p, ul, ol, dl, dd { margin: 0; padding: 0; }
ul, ol { list-style: none; }
a { color: inherit; text-decoration: none; }
button, input, select { font: inherit; color: inherit; margin: 0; }
button { cursor: pointer; }
svg { display: block; flex: none; fill: currentColor; overflow: visible; }
.sprite { position: absolute; width: 0; height: 0; overflow: hidden; }

.i6 { width: 6px; height: 6px; }
.i8 { width: 8px; height: 6px; }
.i10 { width: 10px; height: 10px; }
.i12 { width: 12px; height: 12px; }
.i14 { width: 14px; height: 14px; }
.i16 { width: 16px; height: 14px; }
.i20 { width: 20px; height: 20px; }

/* Desktop and windows */
.desktop { position: relative; min-height: 100vh; overflow: hidden; }
.window { position: absolute; border: 2px solid #dfe0e1; border-radius: 16px; background: #fff; overflow: hidden; }
.window-reports { top: 17px; left: 0; right: 1249px; }
.window-plan { top: 214px; left: 1249px; right: 0; }
.window-calendar { top: 523px; left: 308px; right: 941px; }

.chrome { display: grid; grid-template-columns: 539fr 657fr 432fr; align-items: center; height: 66px; color: #737373; }
.chrome-left { display: flex; align-items: center; padding: 0 77px 0 26px; }
.lights { display: flex; gap: 10px; }
.light { width: 15px; height: 15px; border-radius: 50%; }
.red { background: #ed6a5e; }
.amber { background: #f5bf4f; }
.green { background: #61c554; }
.c-sidebar { width: 25px; height: 20px; margin-left: 33px; }
.c-arrow { width: 12px; height: 20px; margin-left: 36px; }
.c-next { margin-left: 30px; color: #b9b9b9; }
.c-shield { width: 18px; height: 21px; margin-left: auto; }
.address { display: flex; align-items: center; height: 36px; padding: 0 8px; border-radius: 9px; background: #f1f1f1; }
.url { display: flex; align-items: center; gap: 7px; margin: 0 auto; padding-left: 14px; color: #4c4c4c; font: 400 16px/20px Roboto, "Liberation Sans", sans-serif; }
.c-lock { width: 11px; height: 15px; color: #9c9c9c; }
.c-refresh { width: 14px; height: 17px; }
.chrome-right { display: flex; justify-content: flex-end; align-items: center; gap: 31px; padding-right: 23px; }
.chrome-right svg { width: 22px; height: 23px; }
.chrome-right .c-plus { width: 18px; height: 18px; margin: 0 2px; }

.app { position: relative; }

/* Top navigation */
.nav { display: flex; align-items: center; height: 51px; padding: 0 21px 0 22px; border-top: 1px solid #8b8e92; border-bottom: 1px solid #8b8e92; background: var(--nav); color: #fff; font-size: 12px; font-weight: 500; }
.bird { width: 22px; height: 15px; color: var(--green); }
.nav-search { display: flex; align-items: center; gap: 8px; width: 204px; height: 34px; margin: 0 13px 0 16px; padding: 0 11px; border: 1px solid #6c757d; border-radius: 6px; }
.nav-search input { flex: 1; min-width: 0; padding: 0; border: 0; outline: 0; background: none; font-size: 10px; font-weight: 400; appearance: none; }
.nav-search input::placeholder { color: #adb5bd; }
.nav-tabs { display: flex; gap: 7px; }
.nav-tabs a { display: flex; align-items: center; gap: 5px; height: 28px; padding: 0 11px; border-radius: 5px; white-space: nowrap; }
.nav-tabs .pill { background: #495057; }
.nav-tabs .current { color: #00cc78; }
.nav-tabs .more { padding: 0 9px; }
.x { width: 12px; height: 12px; margin-left: -1px; color: #adb5bd; }
.x.on { color: #fff; }
.nav-tools { display: flex; align-items: center; gap: 22px; margin-left: auto; }
.alerts { position: relative; padding-left: 5px; }
.badge { position: absolute; left: 12px; top: -13px; width: 14px; height: 15px; border-radius: 50%; background: #f0284e; font-size: 9px; font-weight: 400; line-height: 15px; text-align: center; }
.me { display: flex; align-items: center; gap: 8px; }
.window-reports .nav { background: #484c52; }
.window-reports .nav .pill { background: #576068; }
.window-reports .bird, .window-reports .nav .current { color: #1fd08a; }

.avatar { display: grid; place-items: center; width: 28px; height: 28px; border-radius: 50%; background: var(--avatar); color: var(--ink); font-size: 10px; font-weight: 500; flex: none; }
.avatar.lg { width: 34px; height: 34px; font-size: 12px; }
.avatar.xl { width: 54px; height: 54px; font-size: 20px; font-weight: 400; }

.body { display: flex; gap: 8px; padding: 7px 6px 6px; background: var(--soft); }
.window-reports .body { background: #f2f7fb; }
.panel { border: 1px solid var(--line); border-radius: 7px; background: #fff; overflow: hidden; }

/* Buttons and form controls */
.btn { display: inline-flex; align-items: center; justify-content: center; gap: 9px; height: 34px; padding: 0 15px; border: 1px solid var(--line); border-radius: 6px; background: #fff; color: var(--ink); font-size: 14px; font-weight: 500; white-space: nowrap; }
.btn.small { height: 24px; padding: 0 11px; gap: 5px; border-radius: 5px; font-size: 12px; }
.btn.dark { border-color: var(--ink); background: var(--ink); color: #fff; }
.btn.slate { border-color: var(--nav); background: var(--nav); color: #fff; }
.btn.sq { width: 34px; padding: 0; }
.btn.sq svg { width: 7px; height: 12px; }
.mini { display: grid; place-items: center; width: 24px; height: 24px; padding: 0; border: 1px solid var(--line); border-radius: 5px; background: #fff; flex: none; }
.panel-head .mini { background: var(--soft); }
.actions { display: flex; gap: 14px; }
.plain { display: flex; align-items: center; gap: 9px; padding: 0 2px 0 19px; border: 0; background: none; font-size: 14px; font-weight: 500; }

.control, .pick { display: grid; align-items: center; }
.control > *, .pick > * { grid-area: 1 / 1; }
.control > svg { justify-self: end; margin-right: 13px; pointer-events: none; }
.control > .i12 { height: 7px; }
.control > .cal { width: 10px; height: 12px; }
.control select, .control input, .amounts input { width: 100%; height: 34px; padding: 0 10px; border: 1px solid var(--line); border-radius: 6px; background: var(--soft); font-size: 10px; appearance: none; outline: 0; }
.control.low select { height: 24px; }
.pick select { width: 100%; height: 24px; padding: 0 9px; border: 1px solid var(--line); border-radius: 5px; background: var(--soft); font-size: 12px; font-weight: 500; appearance: none; }
.pick svg { width: 7px; height: 5px; justify-self: end; margin-right: 13px; pointer-events: none; }
.pick-a { width: 79px; }
.pick-w { width: 86px; }
.pick-c { width: 98px; }
.field label { display: block; font-weight: 600; line-height: 14px; margin-bottom: 7px; }

/* Queues */
.side { display: flex; flex-direction: column; gap: 7px; width: 228px; flex: none; }
.queue { height: 263px; }
.queue-out { height: 290px; border-color: #ffd591; background: #fff5e6; }
.panel-head { display: flex; align-items: center; gap: 5px; height: 44px; padding: 0 9px 0 10px; border-bottom: 1px solid var(--line); color: #343a40; }
.queue-out .panel-head { border-color: #ffe0a8; }
.panel-head h2 { margin-right: auto; font-size: 12px; font-weight: 600; }
.list { padding: 7px 6px; }
.item { display: grid; grid-template-columns: 4px 28px 1fr auto; grid-template-rows: 29px 13px; column-gap: 7px; align-content: start; height: 65px; padding: 11px 7px 0 6px; border-radius: 5px; }
.item::before { content: ""; grid-area: 1 / 1 / 3 / 2; height: 51px; margin-top: -4px; border-radius: 2px; background: var(--stripe); }
.lime { --stripe: #a9d43a; }
.pink { --stripe: #d900ff; }
.blue { --stripe: #4a9ee8; }
.alarm { background: #ffe3e9; }
.item .avatar { grid-area: 1 / 2; }
.who { grid-area: 1 / 3; }
.who b { display: block; font-weight: 600; line-height: 15px; white-space: nowrap; }
.when { grid-area: 1 / 4; color: var(--muted); font-size: 9px; font-weight: 500; line-height: 14px; text-align: right; }
.when b, .when strong { display: block; font-weight: 500; line-height: 15px; color: var(--body); }
.when strong { font-weight: 600; line-height: 13px; }
.when .early { color: var(--green); }
.when .late { color: var(--red); }
.item p { grid-area: 2 / 3 / 3 / 5; color: var(--muted); font-size: 9px; line-height: 13px; white-space: nowrap; }
.item p.big { font-size: 10px; }
.tag { display: flex; align-items: center; gap: 3px; width: max-content; height: 14px; padding: 0 3px; border: 1px solid var(--faint); border-radius: 7px; background: #fff; color: var(--muted); font-size: 9px; font-weight: 500; line-height: 12px; }
.tag svg { width: 6px; height: 8px; }
.ok { border-color: var(--green); background: var(--green); color: #fff; }
.bad { border-color: var(--red); background: var(--red); color: #fff; }
.warn { border-color: var(--orange); background: var(--orange); color: #fff; }
.info { border-color: var(--blue); background: var(--blue); color: #fff; }
.queue .tag:not(.ok):not(.bad):not(.warn) { background: none; }

/* Reports */
.reports { flex: 1; padding: 19px 163px 0; }
.chairs { width: 228px; flex: none; }
.reports-head { display: flex; justify-content: space-between; }
.reports-head p { color: #868e96; font-size: 11px; }
.reports-head h1 { font-size: 17px; font-weight: 700; line-height: 26px; }
.tiles { display: grid; grid-template-columns: repeat(7, 85px); column-gap: 20px; row-gap: 20px; margin-top: 22px; }
.tiles .last { grid-column: 7; position: relative; }
.tiles .row2 { grid-column: 1; }
.tile { display: flex; align-items: center; justify-content: center; position: relative; height: 51px; border-radius: 5px; background: var(--avatar); color: #939ba3; font-size: 11px; }
.tile .i6 { position: absolute; right: 7px; top: 8px; color: var(--ink); }
.tiles p { margin-top: 3px; color: #868e96; font-size: 9px; line-height: 11px; }
.tiles p b { color: var(--ink); font-weight: 600; }
.popover { position: absolute; right: 20px; top: 21px; width: 120px; height: 67px; padding: 39px 48px 0 0; border: 1px solid var(--line); border-radius: 5px; background: #fff; box-shadow: 0 14px 30px rgba(33, 37, 41, .25); color: var(--red); font-size: 11px; font-weight: 500; text-align: right; }
.scrim { position: absolute; inset: 0; background: rgba(33, 37, 41, .25); }

.modal { position: absolute; top: 69px; left: 585px; width: 458px; padding: 20px 27px; border-radius: 5px; background: #fff; }
.modal-head { display: flex; justify-content: space-between; align-items: center; }
.modal-head h2 { font-size: 17px; font-weight: 600; line-height: 26px; }
.btn .bm { width: 9px; height: 11px; }
.notice { display: flex; align-items: center; gap: 15px; margin: 24px 0 20px; font-size: 12px; font-weight: 600; line-height: 17px; }
.notice svg { width: 18px; height: 18px; color: var(--blue); }
.pair { display: grid; grid-template-columns: 1fr 1fr; gap: 43px; }
.field-top { display: flex; justify-content: space-between; }
.field-top a { color: var(--green); }
.chips { display: flex; gap: 7px; margin: 8px 0; }
.chip { display: flex; align-items: center; gap: 3px; height: 14px; padding: 0 3px; border: 1px solid var(--faint); border-radius: 7px; background: #fff; color: var(--muted); font-size: 9px; font-weight: 500; }
.chip svg { width: 6px; height: 6px; }
.or-line { margin: 16px 0 20px; color: var(--faint); font-size: 12px; font-weight: 500; text-align: center; }
.modal-foot { display: flex; justify-content: space-between; margin-top: 21px; }
.modal-foot span { display: flex; gap: 8px; }

/* Treatment plan */
.plan { flex: 1; display: flex; flex-direction: column; }
.patient { display: flex; gap: 14px; padding: 13px 19px 0; color: var(--muted); }
.identity { width: 186px; }
.identity h1 { color: #000; font-size: 19px; font-weight: 700; line-height: 24px; margin: 2px 0 1px; }
.identity p { display: flex; align-items: center; gap: 6px; }
.identity svg { width: 10px; height: 10px; color: #c4cad0; }
.next { width: 137px; }
.next b { margin-right: 8px; color: var(--body); font-weight: 600; }
.next .btn { margin-top: 7px; }
.patient dl { display: grid; grid-template-columns: auto auto; align-content: start; column-gap: 8px; line-height: 16px; margin-top: -1px; }
.patient dt { color: var(--body); font-weight: 600; text-align: right; }
.patient a { color: var(--green); }
.tabs { display: flex; gap: 15px; height: 26px; margin-top: 15px; padding: 0 20px; border-bottom: 1px solid var(--line); color: var(--muted); }
.tabs a { display: flex; align-items: center; gap: 7px; }
.tabs svg { width: 12px; height: 12px; }
.tabs .current { border-bottom: 3px solid var(--green); color: var(--green); font-weight: 600; padding-top: 3px; }
.count { width: 15px; height: 15px; border-radius: 50%; font-weight: 500; line-height: 15px; text-align: center; }
.rose { background: #ffd6de; color: var(--red); }
.sky { background: #e0f0ff; color: var(--blue); }
.plan-title { padding: 26px 24px; font-size: 14px; font-weight: 600; line-height: 24px; }
.scroller { display: flex; justify-content: space-between; padding: 20px 9px 0 24px; border-top: 2px solid #e6e9ec; background: var(--soft); }
.plan-body { display: grid; grid-template-columns: 1fr 245px; column-gap: 14px; row-gap: 20px; align-items: start; width: 1100px; }
.plan-actions { grid-column: 1 / -1; justify-self: end; }
.bar { width: 9px; height: 388px; margin-top: -8px; border-radius: 5px; background: #d9d9d9; }
.card { border: 1px solid var(--line); border-radius: 6px; background: #fff; overflow: hidden; }
.payers { display: grid; gap: 14px; }
.open { border-bottom: 0; border-radius: 6px 6px 0 0; }
.card-head { display: flex; justify-content: flex-end; align-items: center; gap: 7px; height: 48px; padding: 0 19px; border-bottom: 1px solid var(--line); }
.payer { flex: 0 0 424px; color: var(--muted); font-size: 12px; text-align: right; }
.card-head .info { margin-right: auto; }
.fees { display: grid; grid-template-columns: 146px 281px; justify-content: end; }
.amounts, .options { display: grid; grid-template-rows: 24px 24px 24px 25px 24px 46px; row-gap: 3px; padding: 14px 0 5px; }
.short .amounts, .short .options { grid-template-rows: 24px 24px 24px 25px 22px 27px; }
.amounts { padding-left: 7px; padding-right: 7px; background: #e7f3fe; }
.amounts input { height: 24px; }
.amounts a { color: var(--green); }
.amounts b, .amounts > span { align-self: center; color: var(--ink); font-weight: 600; text-align: right; }
.amounts > span { font-weight: 400; }
.option { display: flex; align-items: center; padding: 0 19px 0 8px; color: var(--muted); }
.r2 { grid-row: 2; }
.r3 { grid-row: 3; }
.r5 { grid-row: 5; }
.option > span:first-child { width: 19px; font-size: 12px; }
.option .control { width: 84px; color: var(--ink); }
.option .charge { width: 197px; }
.option label { display: flex; align-items: center; gap: 7px; margin-left: 14px; }
.option label input { width: 17px; height: 18px; border-radius: 4px; appearance: none; background: var(--green) url("data:image/svg+xml,%3Csvg xmlns='http://www.w3.org/2000/svg' viewBox='0 0 17 18'%3E%3Cpath d='M3.5 9.5l3.5 3.5 6.5-7.5' fill='none' stroke='white' stroke-width='1.3'/%3E%3C/svg%3E"); }
.option .mini { margin-left: auto; color: var(--ink); }
.bin { width: 10px; height: 12px; }
.mini .dots { height: 4px; }
.summary h3 { margin-right: auto; font-size: 14px; font-weight: 600; }
.summary dl { display: grid; grid-template-columns: auto auto; padding: 11px 19px 19px; line-height: 18px; height: 91px; color: #000; }
.summary dt { font-weight: 600; }
.summary dd { text-align: right; font-size: 11px; }
.summary .total { margin-top: 6px; color: var(--red); font-weight: 600; }
.plan-foot { display: grid; grid-template-columns: 1fr auto 1fr; align-items: center; height: 60px; padding: 0 14px; border-top: 1px solid var(--line); }
.plan-foot .actions { justify-self: end; }
.plan-foot .actions .btn:first-child { gap: 6px; }
.steps { grid-column: 2; display: flex; align-items: center; gap: 30px; font-weight: 600; }
.steps li { display: flex; align-items: center; gap: 7px; }
.steps i { width: 15px; height: 15px; border-radius: 50%; background: var(--green); color: #fff; font-size: 9px; font-style: normal; font-weight: 400; line-height: 15px; text-align: center; }
.steps svg { width: 5px; height: 8px; }
.todo { color: var(--faint); }
.steps .todo i { background: var(--faint); }

/* Calendar */
.planner { flex: 1; display: grid; grid-template-columns: 204px 1fr; column-gap: 20px; padding: 19px 419px 0 18px; }
.view { display: grid; grid-template-columns: 20px 1fr; align-items: center; gap: 21px; }
.month-head { display: flex; align-items: center; gap: 15px; margin: 18px 0 12px; }
.month-head h2 { margin-right: auto; font-size: 12px; font-weight: 600; line-height: 16px; color: #000; }
.month-head button { padding: 0 3px; border: 0; background: none; }
.month-head svg { width: 6px; height: 10px; }
.month table { width: 100%; border-collapse: collapse; table-layout: fixed; font-size: 10px; text-align: center; }
.month th { height: 26px; padding: 0 0 10px; font-weight: 400; }
.month td { height: 28px; padding: 0; line-height: 18px; vertical-align: top; }
.month td::after { content: ""; display: block; width: 5px; height: 5px; margin: -1px auto 0; border-radius: 50%; }
.o::after { background: #ffb75c; }
.g::after { background: #1ef59e; }
.r::after { background: #fa5270; }
.today { display: block; width: 18px; height: 18px; margin: 0 auto; border-radius: 50%; background: var(--blue); color: #fff; font-weight: 500; }
.month .field { margin-top: 8px; }
.new-patient { width: 100%; margin-top: 20px; }
.day { min-width: 0; display: flex; flex-direction: column; }
.toolbar { display: flex; justify-content: space-between; align-items: center; height: 34px; }
.zoom { display: flex; align-items: center; gap: 20px; color: var(--muted); }
.zoom label { display: flex; align-items: center; gap: 7px; }
.switch { width: 28px; height: 17px; border: 1px solid var(--green); border-radius: 9px; appearance: none; background: radial-gradient(circle at 19px 50%, #fff 7px, var(--green) 8px); }
.date { display: flex; align-items: center; gap: 13px; text-align: center; }
.date h1 { font-size: 14px; font-weight: 600; line-height: 18px; }
.date p { font-size: 9px; line-height: 12px; }
.schedule { flex: 1; margin-top: 19px; border: 1px solid var(--line); border-bottom: 0; border-radius: 14px 14px 0 0; }
.cols { display: grid; grid-template-columns: repeat(3, 1fr); height: 64px; padding-left: 84px; }
.cols > div { padding: 12px 13px; border-right: 1px solid var(--line); }
.cols > div:last-child { border: 0; }
.cols b { font-weight: 600; }
.cols p { color: var(--faint); font-size: 9px; line-height: 13px; }
.hours { display: grid; grid-template-columns: 84px repeat(3, 1fr); grid-template-rows: repeat(20, 34px) 12px; }
.times { grid-area: 1 / 1 / -1 / 2; display: grid; grid-template-rows: repeat(20, 34px) 12px; padding-right: 8px; color: var(--muted); font-size: 11px; font-weight: 500; text-align: right; }
.times time { height: 14px; margin-top: -7px; }
.lines { grid-area: 1 / 2 / -1 / -1; background: repeating-linear-gradient(#dce0e5 0 1px, transparent 1px 34px); }
.event { margin-left: 13px; padding: 6px 7px; font-size: 9px; line-height: 11px; z-index: 1; }
.event b { display: block; font-weight: 600; }
.visit { display: flex; justify-content: space-between; background: #f9d8fd; color: var(--body); padding-top: 7px; }
.visit > div { height: 44px; padding-left: 7px; border-left: 3px solid #d900ff; }
.visit b:first-child { color: var(--ink); }
.visit p { color: #7c7286; }
.file { display: grid; place-items: center; width: 14px; height: 14px; border-radius: 50%; background: #d900ff; color: #fff; }
.file svg { width: 7px; height: 8px; }
.c1 { grid-area: 1 / 2 / 3 / 3; }
.c2 { grid-area: 1 / 3 / 3 / 4; }
.blocked { grid-area: 3 / 3 / 7 / 4; background: #6c757d; color: #fff; }
.free { border: 1px dashed #7fdcb4; background: #b5ffe0; opacity: .55; box-shadow: 0 3px 6px rgba(33, 37, 41, .2); }
.free p { color: var(--green); }
.f1 { grid-area: 10 / 2 / 13 / 3; }
.f2 { grid-area: 14 / 2 / 16 / 3; }
.chosen { grid-area: 15 / 3 / 19 / 4; border: 2px solid #4bd19b; opacity: 1; }
.now { grid-area: 12 / 1 / 13 / -1; display: flex; align-items: center; height: 14px; margin-right: -22px; z-index: 2; color: var(--red); }
.now span { margin-left: 45px; padding: 0 3px; border: 1px solid #ffa3b5; border-radius: 7px; background: #fff; font-size: 9px; font-weight: 600; line-height: 12px; }
.now::after { content: ""; flex: 1; height: 1px; margin-left: 3px; background: #f0496b; }

/* Scheduling drawer */
.drawer { position: absolute; inset: 0 0 0 auto; width: 408px; display: flex; flex-direction: column; border-left: 1px solid var(--line); border-radius: 14px 0 0 14px; background: #fff; box-shadow: 0 0 40px rgba(33, 37, 41, .4); z-index: 3; overflow: hidden; clip-path: inset(0 0 0 -60px); }
.drawer-head { display: flex; align-items: flex-start; gap: 18px; height: 95px; padding: 26px; background: #e8ebee; border-top: 1px solid var(--line); }
.drawer-head svg { width: 18px; height: 18px; margin-top: 2px; }
.drawer-head h2 { font-size: 19px; font-weight: 700; line-height: 24px; }
.drawer-main { flex: 1; display: flex; flex-direction: column; padding: 0 20px; margin-top: -20px; }
.contact { display: flex; gap: 7px; height: 82px; padding: 12px; border: 1px solid var(--line); border-radius: 6px; background: #fff; color: var(--muted); font-size: 9px; }
.contact > div { flex: 1; }
.contact h3 { color: var(--ink); font-size: 10px; font-weight: 600; line-height: 14px; }
.contact h3 span { color: var(--muted); font-size: 9px; font-weight: 400; margin-left: 1px; }
.contact p { display: flex; align-items: center; gap: 5px; }
.contact p svg { width: 12px; height: 10px; color: #ced3da; }
.contact a { color: var(--green); }
.contact > svg { align-self: center; margin-right: 1px; color: var(--ink); }
.subtabs { display: flex; gap: 14px; height: 40px; margin: 0 -20px 13px; padding: 19px 20px 0; border-bottom: 1px solid var(--line); color: var(--muted); }
.subtabs .current { height: 21px; border-bottom: 2px solid var(--green); color: var(--ink); font-weight: 600; }
.appt { display: flex; align-items: center; justify-content: space-between; height: 76px; margin-bottom: -1px; padding: 12px; border: 1px solid var(--line); border-radius: 6px; background: #fff; box-shadow: 0 4px 8px rgba(33, 37, 41, .2); font-size: 9px; line-height: 12px; }
.appt > div { height: 50px; padding-left: 7px; border-left: 4px solid #4a9ee8; }
.appt h3 { font-size: 10px; font-weight: 600; line-height: 13px; }
.appt b { color: var(--body); font-weight: 600; }
.appt p { color: var(--muted); }
.slots-head { display: flex; justify-content: space-between; align-items: center; height: 20px; margin: 1px 0 7px; }
.slots-head h3 { font-size: 14px; font-weight: 600; }
.slots-head a { display: flex; align-items: center; gap: 5px; color: var(--green); font-size: 12px; font-weight: 500; }
.segments { display: grid; grid-template-columns: repeat(3, 1fr); font-size: 12px; font-weight: 500; }
.segments label, .slots label { display: grid; place-items: center; height: 24px; border: 1px solid var(--line); }
.segments input, .slots input { position: absolute; opacity: 0; }
.segments label + label { border-left: 0; }
.segments label:first-child { border-radius: 6px 0 0 6px; }
.segments label:last-child { border-radius: 0 6px 6px 0; }
.segments label:has(:checked) { border: 1px solid var(--green); background: #e3fff3; color: var(--green); }
.slots { display: grid; grid-template-columns: 1fr 1fr; gap: 7px 12px; margin: 13px 0 20px; color: var(--green); }
.slots label { border-radius: 6px; }
.slots label > * { grid-area: 1 / 1; }
.slots svg { width: 10px; height: 8px; justify-self: start; margin-left: 11px; }
.slots label:has(:checked) { display: flex; padding-right: 42px; border-color: var(--green); background: #e3fff3; font-weight: 600; justify-content: space-between; }
.show-more { align-self: center; width: 118px; margin-bottom: 13px; }
.drawer .btn.small { padding: 0; }
.drawer .field { margin-bottom: 13px; }
.fab { display: grid; place-items: center; width: 44px; height: 44px; margin: auto auto 14px; padding: 0; border: 1px solid var(--line); border-radius: 50%; background: #fff; box-shadow: 0 4px 8px rgba(33, 37, 41, .2); }
.drawer-foot { display: grid; grid-template-columns: 1fr 1fr; gap: 14px; padding: 13px; border-top: 1px solid var(--line); }
```
